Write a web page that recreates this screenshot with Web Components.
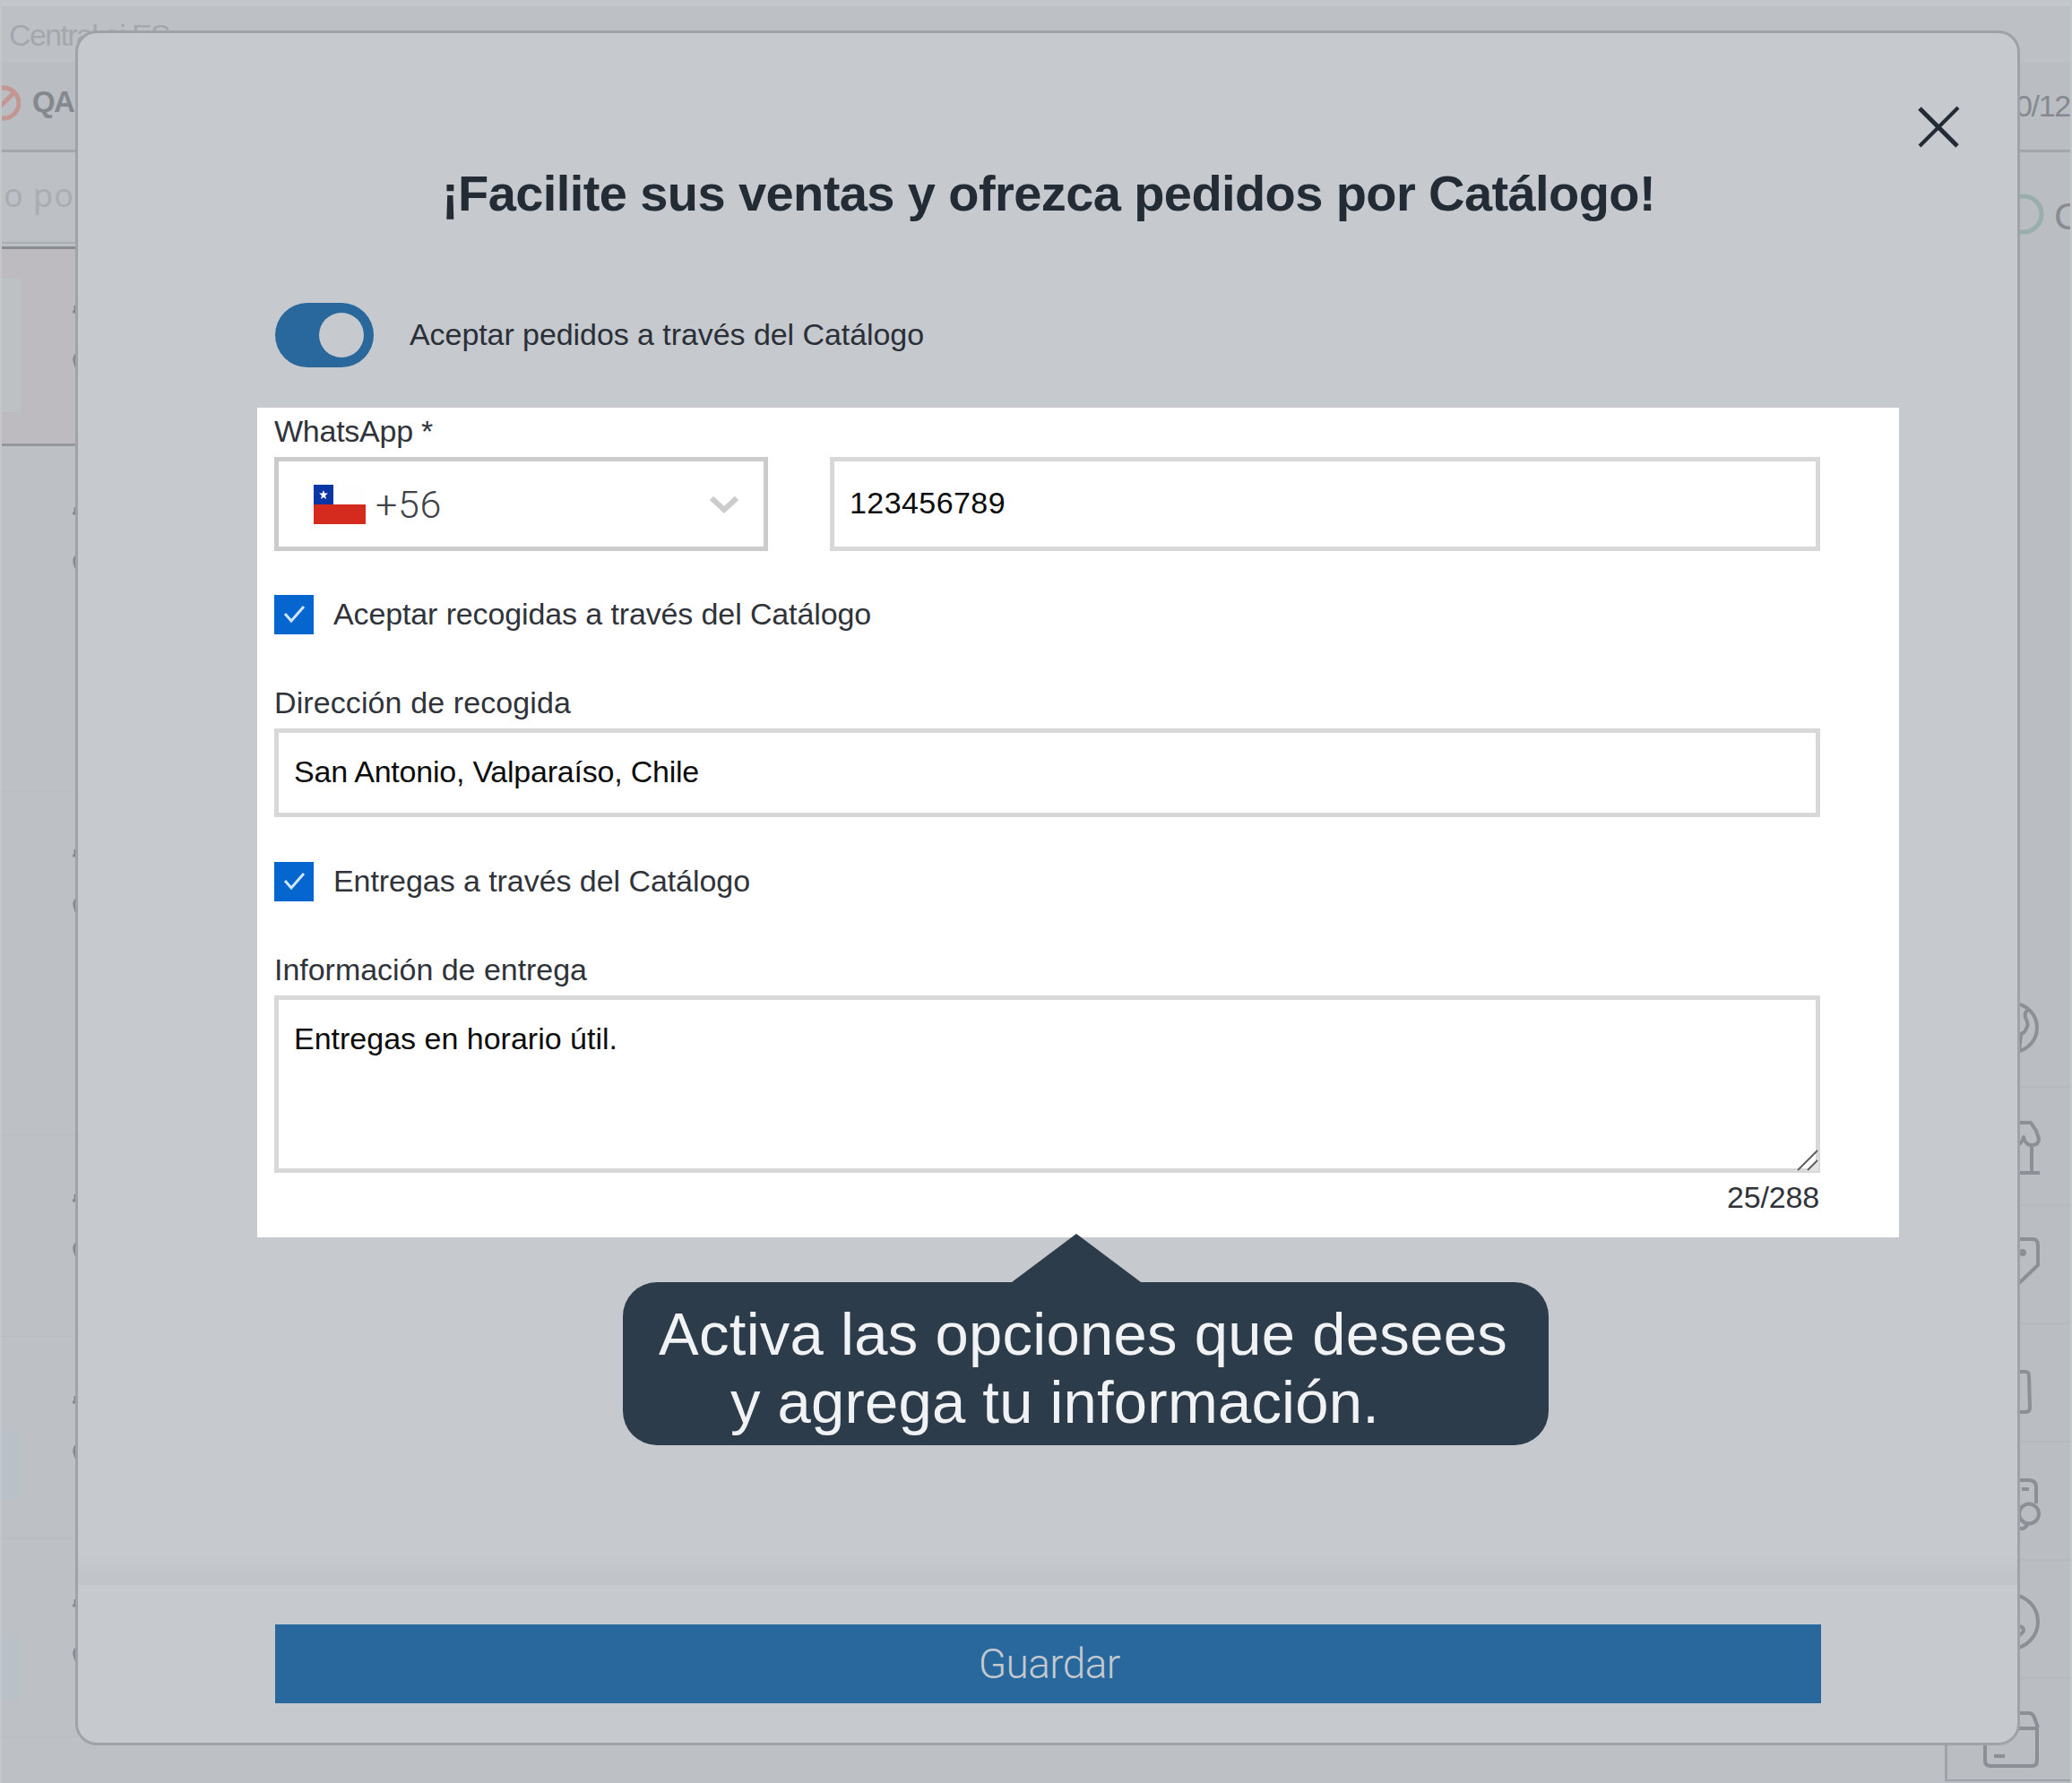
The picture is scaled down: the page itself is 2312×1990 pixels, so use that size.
<!DOCTYPE html>
<html lang="es">
<head>
<meta charset="utf-8">
<title>Pedidos por Catálogo</title>
<style>
  body {
    margin: 0;
    width: 2312px;
    height: 1990px;
    overflow: hidden;
    position: relative;
    font-family: "Liberation Sans", Arial, sans-serif;
    background: #bdc1c5;
  }

  .light {
    font-family: Roboto, "Liberation Sans", sans-serif;
  }
</style>
</head>
<body>
<app-backdrop></app-backdrop>

<catalog-dialog>
  <fit-text slot="title" width="1354" size="56" line="70" weight="700">¡Facilite sus ventas y ofrezca pedidos por Catálogo!</fit-text>
  <toggle-switch slot="toggle">
    <fit-text width="574" size="34" line="44">Aceptar pedidos a través del Catálogo</fit-text>
  </toggle-switch>

  <form-panel>
    <fit-text style="margin-bottom: 9px" width="177" size="34" line="40">WhatsApp *</fit-text>
    <phone-row>
      <fit-text slot="code" class="light" width="74" size="43" line="50" weight="300">+56</fit-text>
      <fit-text slot="number" width="174" size="34" line="40">123456789</fit-text>
    </phone-row>
    <check-row style="margin-top: 49px">
      <fit-text width="600" size="34" line="44">Aceptar recogidas a través del Catálogo</fit-text>
    </check-row>
    <fit-text style="margin: 56px 0 9px" width="331" size="34" line="40">Dirección de recogida</fit-text>
    <text-box style="height: 99px">
      <fit-text width="452" size="34" line="40">San Antonio, Valparaíso, Chile</fit-text>
    </text-box>
    <check-row style="margin-top: 50px">
      <fit-text width="465" size="34" line="44">Entregas a través del Catálogo</fit-text>
    </check-row>
    <fit-text style="margin: 56px 0 9px" width="349" size="34" line="40">Información de entrega</fit-text>
    <text-box multiline style="height: 198px">
      <fit-text width="361" size="34" line="40">Entregas en horario útil.</fit-text>
    </text-box>
    <fit-text style="align-self: flex-end; margin: 7px 1px 0 0" width="103" size="34" line="40">25/288</fit-text>
  </form-panel>

  <fit-text slot="action" class="light" width="158" size="46" line="60" weight="300">Guardar</fit-text>
</catalog-dialog>

<hint-bubble>
  <fit-text width="947" size="67" line="76">Activa las opciones que desees</fit-text>
  <fit-text style="margin-left: 80px" width="724" size="67" line="76">y agrega tu información.</fit-text>
</hint-bubble>

<script>
const make = (html) => {
  const template = document.createElement("template");
  template.innerHTML = html;
  return template;
};

class BaseElement extends HTMLElement {
  constructor() {
    super();
    this.attachShadow({ mode: "open" });
    this.shadowRoot.appendChild(this.constructor.template.content.cloneNode(true));
  }
}

/* one line of text, tracked so that it fills the given width */
class FitText extends BaseElement {
  static template = make(/*html*/`
    <style>
      :host { display: block; white-space: nowrap; flex: none; }
      span { display: inline-block; }
    </style>
    <span><slot></slot></span>`);

  connectedCallback() {
    const width = Number(this.getAttribute("width"));
    this.style.fontSize = this.getAttribute("size") + "px";
    this.style.lineHeight = this.getAttribute("line") + "px";
    this.style.height = this.getAttribute("line") + "px";
    this.style.fontWeight = this.getAttribute("weight") || "400";
    this.style.width = width + "px";
    const span = this.shadowRoot.querySelector("span");
    const natural = span.getBoundingClientRect().width;
    span.style.letterSpacing = (width - natural) / this.textContent.length + "px";
  }
}

class AppBackdrop extends BaseElement {
  static template = make(/*html*/`
    <style>
      :host { display: flex; flex-direction: column; height: 1990px; box-sizing: border-box;
              border-left: 2px solid #c3c7ca; border-right: 2px solid #c4c6c6; }
      .strip { height: 7px; background: #c4c8cc; }
      .bar { height: 62px; background: #bdc1c6; color: #a4a8ad; padding-left: 8px;
             box-sizing: border-box; padding-top: 12px; }
      .account { height: 98px; background: #babdc2; border-bottom: 3px solid #a3a7ac;
                 display: flex; align-items: center; justify-content: space-between; color: #85898f; }
      .account div { display: flex; align-items: center; gap: 13px; margin-top: -9px; }
      .body { flex: 1; display: flex; justify-content: space-between; }
      .list { width: 84px; display: flex; flex-direction: column; }
      .search { height: 102px; border-bottom: 2px solid #a9adb1; color: #a9adb2;
                padding: 26px 0 0 2px; box-sizing: border-box; }
      .item { border-bottom: 1px solid #b8bbbf; box-sizing: border-box; }
      .first { height: 223px; margin-top: 3px; background: #bdbac0; border-top: 3px solid #898d93;
               border-bottom: 3px solid #94989d; }
      svg { display: block; flex: none; }
      .side { width: 140px; background: #babdc2; display: flex; flex-direction: column; }
      .status { height: 912px; padding: 40px 0 0 66px; box-sizing: border-box; display: flex; gap: 10px; color: #888c91;
                align-items: flex-start; overflow: hidden; }
      .tool { height: 132px; box-sizing: border-box; border-bottom: 2px solid #b5b9be; }
      .tool svg { fill: none; stroke: #8c9096; stroke-width: 4; stroke-linejoin: round; }
      .last { height: 114px; border: solid #a0a4aa; border-width: 0 0 2px 3px; }
      .last svg { margin-left: -3px; }
    </style>
    <div class="strip"></div>
    <div class="bar"><fit-text width="179" size="34" line="40">Central ai ES</fit-text></div>
    <div class="account">
      <div>
        <svg width="21" height="42" fill="none" stroke="#c39691" stroke-width="5"><circle cx="2" cy="22" r="17"/><path d="M-10 34 14 10"/></svg>
        <fit-text width="46" size="33" line="40" weight="700">QA</fit-text>
      </div>
      <fit-text width="61" size="34" line="40">0/12</fit-text>
    </div>
    <div class="body">
      <div class="list">
        <div class="search"><fit-text style="font-family: 'Noto Sans'" width="79" size="36" line="44">o po</fit-text></div>
        <div class="item first"></div>
        <div class="item" style="height: 385px"></div>
        <div class="item" style="height: 384px"></div>
        <div class="item" style="height: 225px"></div>
        <div class="item" style="height: 226px"></div>
        <div class="item" style="height: 221px"></div>
      </div>
      <div class="side">
        <div class="status">
          <svg width="46" height="60" fill="none" stroke="#99afad" stroke-width="5"><circle cx="22" cy="29" r="20"/></svg>
          <fit-text width="34" size="43" line="62">C</fit-text>
        </div>
        <div class="tool"><svg width="140" height="130" viewBox="2170 1082 140 130"><circle cx="2246" cy="1147" r="27"/><path d="M2264 1126q-7 5-3 12 3 6 0 10-2 5-6 6l-2 20"/></svg></div>
        <div class="tool"><svg width="140" height="130" viewBox="2170 1214 140 130"><path d="M2240 1253h26l6 9 3 9q0 7-8 7-7 0-9-9-2 9-10 9M2267 1278v31M2240 1309h36"/></svg></div>
        <div class="tool"><svg width="140" height="130" viewBox="2170 1346 140 130"><path d="M2240 1383h28q6 0 6 7v22l-21 20"/><circle cx="2257" cy="1398" r="2"/></svg></div>
        <div class="tool"><svg width="140" height="130" viewBox="2170 1478 140 130"><path d="M2240 1531h20q4 0 4 5l1 35q0 5-5 5h-21"/></svg></div>
        <div class="tool"><svg width="140" height="130" viewBox="2170 1610 140 130"><path d="M2240 1652h24q8 0 8 8v18M2256 1662h8M2252 1706h6l5-5"/><circle cx="2264" cy="1689.500" r="11"/></svg></div>
        <div class="tool"><svg width="140" height="130" viewBox="2170 1742 140 130"><circle cx="2244" cy="1810" r="30"/><path d="M2253 1815q5 1 5 4t-5 6"/></svg></div>
        <div class="tool last"><svg width="140" height="112" viewBox="2170 1874 140 112"><path d="M2215 1929v36q0 6 6 6h46q6 0 6-6v-36h-58l6-17h43q4 0 6 5l4 11M2225 1960h12"/></svg></div>
      </div>
    </div>`);

  connectedCallback() {
    /* avatar tints and the first strokes of the texts cut off by the dialog */
    const marks = [[345, 403], [570, 628, 677, 689], [952, 1011, 1060, 1072], [1337, 1395], [1562, 1621], [1789, 1847]];
    const tops = [278, 498, 883, 1267, 1492, 1718];
    this.shadowRoot.querySelectorAll(".item").forEach((item, i) => {
      const [a, c, ...dots] = marks[i].map((y) => y - tops[i]);
      let art = `<path d="M79 ${a + 3}h3v-7" stroke-width="3"/><path d="M84 ${c - 8}q-4 3-3 8t3 8" stroke-width="3"/>`;
      for (const y of dots) art += `<path d="M82 ${y}h2" stroke-width="3"/>`;
      if (i === 0) art = `<rect width="21" height="149" y="33" fill="#bdc1c4" stroke="none"/>` + art;
      if (i > 3) art = `<rect width="20" height="76" y="105" fill="#b9bfc8" fill-opacity=".7" stroke="none"/>` + art;
      item.innerHTML = `<svg width="84" height="200" fill="none" stroke="#858a90">${art}</svg>`;
    });
  }
}

class CatalogDialog extends BaseElement {
  static template = make(/*html*/`
    <style>
      :host { position: absolute; left: 84px; top: 34px; width: 2170px; height: 1914px;
              box-sizing: border-box; border: 3px solid #9fa3a8; border-radius: 24px;
              background: #c6c9ce; display: flex; flex-direction: column; overflow: hidden; }
      header { display: flex; justify-content: flex-end; height: 113px; padding: 80px 64px 0 0; box-sizing: border-box; }
      svg { display: block; flex: none; }
      .title { color: #232b34; height: 70px; display: flex; padding-left: 406px; margin-top: 31px; }
      .toggle { margin: 87px 0 45px 220px; }
      main { flex: 1; }
      .fade { height: 36px; background: linear-gradient(#c6c9ce, #c0c3c8); }
      footer { height: 176px; box-sizing: border-box; padding: 44px 219px 0 219.5px; }
      button { width: 100%; height: 88px; border: 0; padding: 0 0 0 3px; background: #29689c; color: #c3c9cf;
               font-family: inherit; display: flex; align-items: center; justify-content: center; }
    </style>
    <header>
      <svg width="48" height="48" fill="none" stroke="#232b34"><path d="M3 4 45 46" stroke-width="5"/><path d="M46 3 3 46" stroke-width="4"/></svg>
    </header>
    <div class="title"><slot name="title"></slot></div>
    <div class="toggle"><slot name="toggle"></slot></div>
    <main><slot></slot></main>
    <div class="fade"></div>
    <footer><button><slot name="action"></slot></button></footer>`);
}

class ToggleSwitch extends BaseElement {
  static template = make(/*html*/`
    <style>
      :host { display: flex; align-items: center; gap: 40px; height: 72px; color: #2b3038; }
      .track { width: 110px; height: 72px; border-radius: 36px; background: #29689c;
               display: flex; align-items: center; justify-content: flex-end; padding-right: 11px; box-sizing: border-box; }
      .knob { width: 50px; height: 50px; border-radius: 50%; background: #c6c9ce; }
      .text { margin-top: -3px; }
    </style>
    <div class="track"><div class="knob"></div></div>
    <div class="text"><slot></slot></div>`);
}

class FormPanel extends BaseElement {
  static template = make(/*html*/`
    <style>
      :host { display: flex; flex-direction: column; width: 1832px; height: 926px; margin-left: 200px;
              box-sizing: border-box; padding: 6px 88px 0 19px; background: #fff; color: #30343a; }
    </style>
    <slot></slot>`);
}

class PhoneRow extends BaseElement {
  static template = make(/*html*/`
    <style>
      :host { display: flex; gap: 69px; height: 105px; }
      .select { width: 551px; box-sizing: border-box; border: 5px solid #ccc; color: #40444a;
                display: flex; align-items: center; padding: 0 27px 0 39px; }
      .code { flex: 1; margin-left: 11px; }
      text-box { flex: 1; }
      svg { display: block; }
    </style>
    <div class="select">
      <svg width="58" height="44"><path fill="#fefefe" d="M0 0h58v22H0z"/><path fill="#0a36a5" d="M0 0h22v22H0z"/><path fill="#d52b1e" d="M0 22h58v22H0z"/><path fill="#fff" d="m11 6 1.300 3.500H16l-3 2.500 1 4-3-2-3 2 1-4-3-2.500h3.700z"/></svg>
      <div class="code"><slot name="code"></slot></div>
      <svg width="34" height="24" fill="none" stroke="#ccc" stroke-width="6"><path d="m3 5 14 13L31 5"/></svg>
    </div>
    <text-box><slot name="number"></slot></text-box>`);
}

class TextBox extends BaseElement {
  static template = make(/*html*/`
    <style>
      :host { display: flex; align-items: center; justify-content: space-between; box-sizing: border-box;
              border: 5px solid #d8d8d8; padding: 0 0 3px 17px; background: #fff; color: #0c0c0c; }
      :host([multiline]) { align-items: flex-start; padding: 23px 0 0 17px; }
      svg { display: none; }
      :host([multiline]) svg { display: block; align-self: flex-end; margin: 0 -3px -3px 0; }
    </style>
    <slot></slot>
    <svg width="26" height="26" fill="none" stroke="#606060" stroke-width="2"><path fill="#e4e4e4" stroke="none" d="M26 12v14H12z"/><path d="M3 25 25 3M14 25l11-11"/></svg>`);
}

class CheckRow extends BaseElement {
  static template = make(/*html*/`
    <style>
      :host { display: flex; align-items: center; gap: 22px; height: 44px; }
      svg { display: block; background: #0566d0; }
      .text { margin-top: -2px; }
    </style>
    <svg width="44" height="44" fill="none" stroke="#d3e5f8" stroke-width="3"><path d="m12 21 7 8 14-16"/></svg>
    <div class="text"><slot></slot></div>`);
}

class HintBubble extends BaseElement {
  static template = make(/*html*/`
    <style>
      :host { position: absolute; left: 695px; top: 1377px; width: 1033px; display: block; color: #f1f2f4; }
      svg { display: block; margin-left: 434px; fill: #2d3c4b; }
      .box { height: 182px; box-sizing: border-box; border-radius: 38px; background: #2d3c4b; padding: 20px 0 0 40px; }
    </style>
    <svg width="144" height="54"><path d="M0 54 72 0l72 54z"/></svg>
    <div class="box"><slot></slot></div>`);
}

/* the wrappers come first: text is measured once it sits in its place */
customElements.define("app-backdrop", AppBackdrop);
customElements.define("catalog-dialog", CatalogDialog);
customElements.define("form-panel", FormPanel);
customElements.define("phone-row", PhoneRow);
customElements.define("text-box", TextBox);
customElements.define("check-row", CheckRow);
customElements.define("toggle-switch", ToggleSwitch);
customElements.define("hint-bubble", HintBubble);
customElements.define("fit-text", FitText);
</script>
</body>
</html>
